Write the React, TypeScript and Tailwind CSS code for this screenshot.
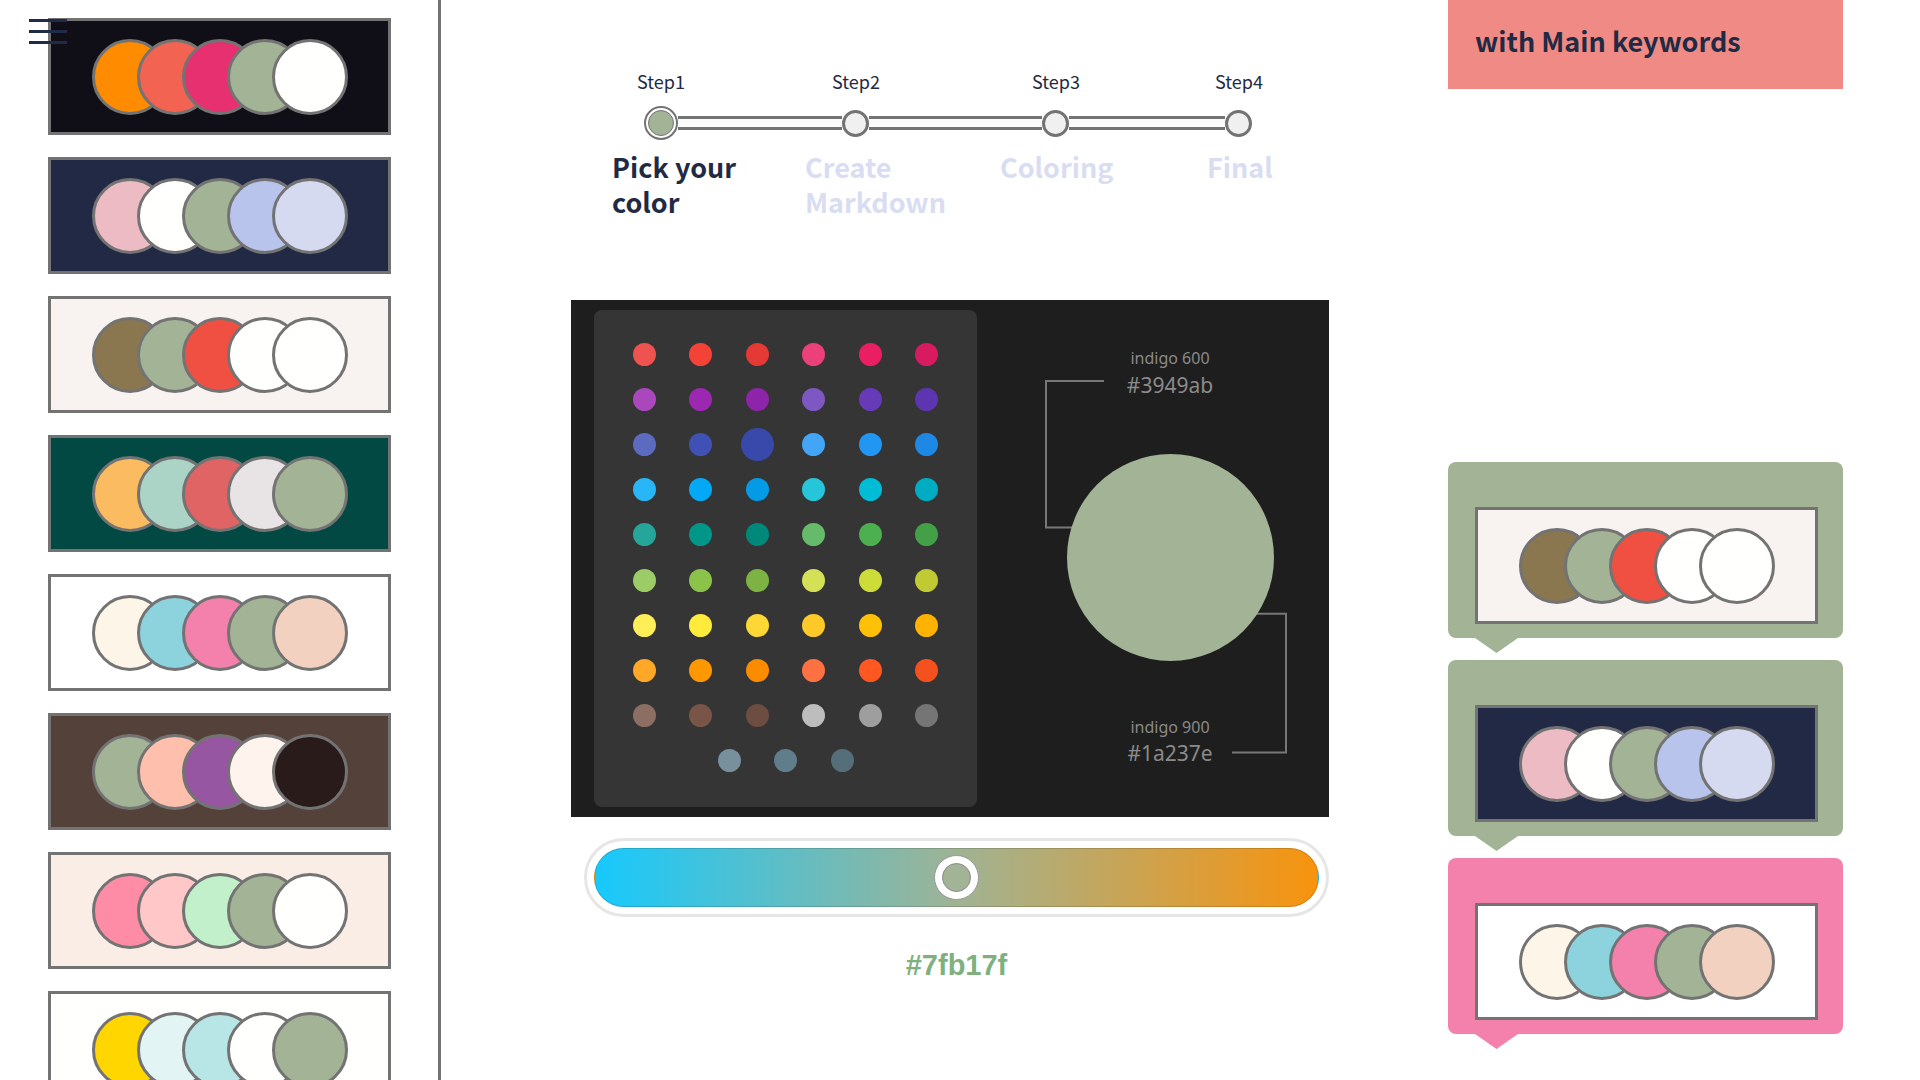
import React from 'react';

type Palette = { bg: string; colors: string[] };

const sidebarPalettes: Palette[] = [
    { bg: 'bg-[#100f17]', colors: ['bg-[#ff8c00]', 'bg-[#f26451]', 'bg-[#e63070]', 'bg-[#a2b396]', 'bg-[#fffffd]'] },
    { bg: 'bg-[#222944]', colors: ['bg-[#edbbc4]', 'bg-[#fffffd]', 'bg-[#a2b396]', 'bg-[#b8c4ec]', 'bg-[#d5daf0]'] },
    { bg: 'bg-[#f8f3f0]', colors: ['bg-[#8b774f]', 'bg-[#a2b396]', 'bg-[#f05042]', 'bg-[#fffffd]', 'bg-[#fffffd]'] },
    { bg: 'bg-[#024843]', colors: ['bg-[#fbbb60]', 'bg-[#abd3c6]', 'bg-[#e06464]', 'bg-[#e8e4e5]', 'bg-[#a2b396]'] },
    { bg: 'bg-white', colors: ['bg-[#fdf6e8]', 'bg-[#8dd3de]', 'bg-[#f480ac]', 'bg-[#a2b396]', 'bg-[#f2d1c1]'] },
    { bg: 'bg-[#54413a]', colors: ['bg-[#a2b396]', 'bg-[#ffbfad]', 'bg-[#9656a2]', 'bg-[#fff3ee]', 'bg-[#291b19]'] },
    { bg: 'bg-[#faede6]', colors: ['bg-[#ff8ca6]', 'bg-[#ffc7c8]', 'bg-[#c2f0cb]', 'bg-[#a2b396]', 'bg-[#fffffd]'] },
    { bg: 'bg-[#fffffd]', colors: ['bg-[#ffd600]', 'bg-[#e2f4f4]', 'bg-[#b8e6e6]', 'bg-[#fffffd]', 'bg-[#a2b396]'] },
];

const bubbles = [
    { bubble: 'bg-[#a2b396]', palette: sidebarPalettes[2] },
    { bubble: 'bg-[#a2b396]', palette: sidebarPalettes[1] },
    { bubble: 'bg-[#f480ac]', palette: sidebarPalettes[4] },
];

// material colors, 9 full rows + blue grey
const dotRows = [
    ['bg-[#ef5350]', 'bg-[#f44336]', 'bg-[#e53935]', 'bg-[#ec407a]', 'bg-[#e91e63]', 'bg-[#d81b60]'],
    ['bg-[#ab47bc]', 'bg-[#9c27b0]', 'bg-[#8e24aa]', 'bg-[#7e57c2]', 'bg-[#673ab7]', 'bg-[#5e35b1]'],
    ['bg-[#5c6bc0]', 'bg-[#3f51b5]', 'bg-[#3949ab]', 'bg-[#42a5f5]', 'bg-[#2196f3]', 'bg-[#1e88e5]'],
    ['bg-[#29b6f6]', 'bg-[#03a9f4]', 'bg-[#039be5]', 'bg-[#26c6da]', 'bg-[#00bcd4]', 'bg-[#00acc1]'],
    ['bg-[#26a69a]', 'bg-[#009688]', 'bg-[#00897b]', 'bg-[#66bb6a]', 'bg-[#4caf50]', 'bg-[#43a047]'],
    ['bg-[#9ccc65]', 'bg-[#8bc34a]', 'bg-[#7cb342]', 'bg-[#d4e157]', 'bg-[#cddc39]', 'bg-[#c0ca33]'],
    ['bg-[#ffee58]', 'bg-[#ffeb3b]', 'bg-[#fdd835]', 'bg-[#ffca28]', 'bg-[#ffc107]', 'bg-[#ffb300]'],
    ['bg-[#ffa726]', 'bg-[#ff9800]', 'bg-[#fb8c00]', 'bg-[#ff7043]', 'bg-[#ff5722]', 'bg-[#f4511e]'],
    ['bg-[#8d6e63]', 'bg-[#795548]', 'bg-[#6d4c41]', 'bg-[#bdbdbd]', 'bg-[#9e9e9e]', 'bg-[#757575]'],
];
const lastRow = ['bg-[#78909c]', 'bg-[#607d8b]', 'bg-[#546e7a]'];

const PaletteCard = ({ palette }: { palette: Palette }) => (
    <div className={`flex h-[117px] w-[343px] shrink-0 items-center justify-center border-[3px] border-[#737373] ${palette.bg}`}>
        {palette.colors.map((c, i) => (
            <span
                key={i}
                className={`h-[76px] w-[76px] shrink-0 rounded-full border-[3px] border-[#737373] ${c} ${i > 0 ? '-ml-[31px]' : ''}`}
            />
        ))}
    </div>
);

const StepDot = () => <span className="h-[27px] w-[27px] shrink-0 rounded-full border-[3px] border-[#737373] bg-[#eff0ef]" />;
const Track = ({ w }: { w: string }) => <span className={`h-[14px] shrink-0 border-y-[3px] border-[#737373] bg-[#fbfbfb] ${w}`} />;

const Stepper = () => (
    <div className="flex flex-col pt-[69px] font-['Noto_Sans_CJK_KR','Noto_Sans',sans-serif]">
        <div className="flex text-[18px] leading-[24px] text-[#1f2a44]">
            <span className="ml-[50px] w-[80px] text-center">Step1</span>
            <span className="ml-[115px] w-[80px] text-center">Step2</span>
            <span className="ml-[120px] w-[80px] text-center">Step3</span>
            <span className="ml-[103px] w-[80px] text-center">Step4</span>
        </div>
        <div className="ml-[73px] mt-[13px] flex h-[34px] items-center">
            <span className="h-[34px] w-[34px] shrink-0 rounded-full border-2 border-[#737373] bg-white p-[2px]">
                <span className="block h-full w-full rounded-full border border-[#737373] bg-[#a2b396]" />
            </span>
            <Track w="w-[164px]" />
            <StepDot />
            <Track w="w-[173px]" />
            <StepDot />
            <Track w="w-[156px]" />
            <StepDot />
        </div>
        <div className="mt-[9px] flex pl-[41px] text-[27px] font-bold leading-[35px] text-[#d9ddf2]">
            <span className="w-[193px] text-[#1f2a44]">Pick your<br />color</span>
            <span className="w-[195px]">Create<br />Markdown</span>
            <span className="w-[207px]">Coloring</span>
            <span>Final</span>
        </div>
    </div>
);

const ColorPicker = () => (
    <div className="mt-[81px] flex h-[517px] w-[758px] bg-[#1e1e1e] py-[10px] pl-[23px]">
        <div className="flex h-[497px] w-[383px] shrink-0 flex-col items-center rounded-[8px] bg-[#353535] pt-[22px]">
            <div className="grid grid-cols-[repeat(6,56.6px)]">
                {dotRows.map((row, r) =>
                    row.map((c, i) => (
                        <div key={`${r}-${i}`} className="flex h-[45.1px] items-center justify-center">
                            <span className={`rounded-full ${c} ${r === 2 && i === 2 ? 'h-[33px] w-[33px]' : 'h-[23px] w-[23px]'}`} />
                        </div>
                    ))
                )}
            </div>
            <div className="flex h-[45px] items-center gap-[33.5px]">
                {lastRow.map((c) => (
                    <span key={c} className={`h-[23px] w-[23px] rounded-full ${c}`} />
                ))}
            </div>
        </div>
        <div className="relative flex flex-1 flex-col items-center pl-[34px] pt-[38px] font-['Noto_Sans','Open_Sans',sans-serif] text-[#8a8a8a]">
            <svg className="absolute left-0 top-[-10px] h-[517px] w-[352px]" viewBox="0 0 352 517" fill="none">
                <polyline points="127,81 69,81 69,227.6 100,227.6" stroke="#777" strokeWidth="2" />
                <polyline points="270,313.7 309,313.7 309,452.5 255,452.5" stroke="#777" strokeWidth="2" />
            </svg>
            <span className="relative text-[16px] leading-[20px]">indigo 600</span>
            <span className="relative mt-[4px] text-[21px] leading-[26px]">#3949ab</span>
            <span className="relative mt-[56px] h-[207px] w-[207px] rounded-full bg-[#a2b396]" />
            <span className="relative mt-[56px] text-[16px] leading-[20px]">indigo 900</span>
            <span className="relative mt-[3px] text-[21px] leading-[26px]">#1a237e</span>
        </div>
    </div>
);

const HueSlider = () => (
    <div className="ml-[13px] flex w-[745px] flex-col items-center">
        <div className="mt-[21px] h-[79px] w-full rounded-full border-[3px] border-[#e6e6e6] bg-white p-[7px]">
            <div className="flex h-[59px] w-full items-center justify-center rounded-full border border-black/15 bg-[linear-gradient(to_right,#17c9fd,#9fb394_50%,#f8930d)]">
                <span className="h-[45px] w-[45px] rounded-full border border-[#9a9a9a] bg-white p-[7px]">
                    <span className="block h-full w-full rounded-full border border-[#8a8a8a] bg-[#a2b396]" />
                </span>
            </div>
        </div>
        <span className="mt-[31px] font-['Liberation_Sans',Arial,sans-serif] text-[29px] font-bold leading-[34px] text-[#7fb17f]">#7fb17f</span>
    </div>
);

export default function App() {
    return (
        <div className="flex h-[1080px] w-[1920px] overflow-hidden bg-white">
            <aside className="relative flex h-full w-[441px] shrink-0 flex-col gap-[22px] overflow-hidden border-r-[3px] border-[#737373] pl-[48px] pt-[18px]">
                {sidebarPalettes.map((p, i) => (
                    <PaletteCard key={i} palette={p} />
                ))}
                <button className="absolute left-[29px] top-[19px] flex flex-col gap-[8px]">
                    <span className="h-[3px] w-[38px] bg-[#222b45]" />
                    <span className="h-[3px] w-[38px] bg-[#222b45]" />
                    <span className="h-[3px] w-[38px] bg-[#222b45]" />
                </button>
            </aside>

            <main className="flex w-[1007px] shrink-0 flex-col pl-[130px]">
                <Stepper />
                <ColorPicker />
                <HueSlider />
            </main>

            <section className="flex w-[395px] shrink-0 flex-col font-['Noto_Sans_CJK_KR','Noto_Sans',sans-serif]">
                <div className="flex h-[89px] items-center bg-[#ef8a84] pb-[7px] pl-[27px] text-[27px] font-bold text-[#1f2a44]">
                    with Main keywords
                </div>
                <div className="mt-[373px] flex flex-col">
                    {bubbles.map((b, i) => (
                        <div key={i} className={`flex flex-col ${i > 0 ? 'mt-[7px]' : ''}`}>
                            <div className={`h-[176px] w-full rounded-[8px] pl-[27px] pt-[45px] ${b.bubble}`}>
                                <PaletteCard palette={b.palette} />
                            </div>
                            <span className={`ml-[27px] h-[15px] w-[43px] [clip-path:polygon(0_0,100%_0,50%_100%)] ${b.bubble}`} />
                        </div>
                    ))}
                </div>
            </section>
        </div>
    );
}
